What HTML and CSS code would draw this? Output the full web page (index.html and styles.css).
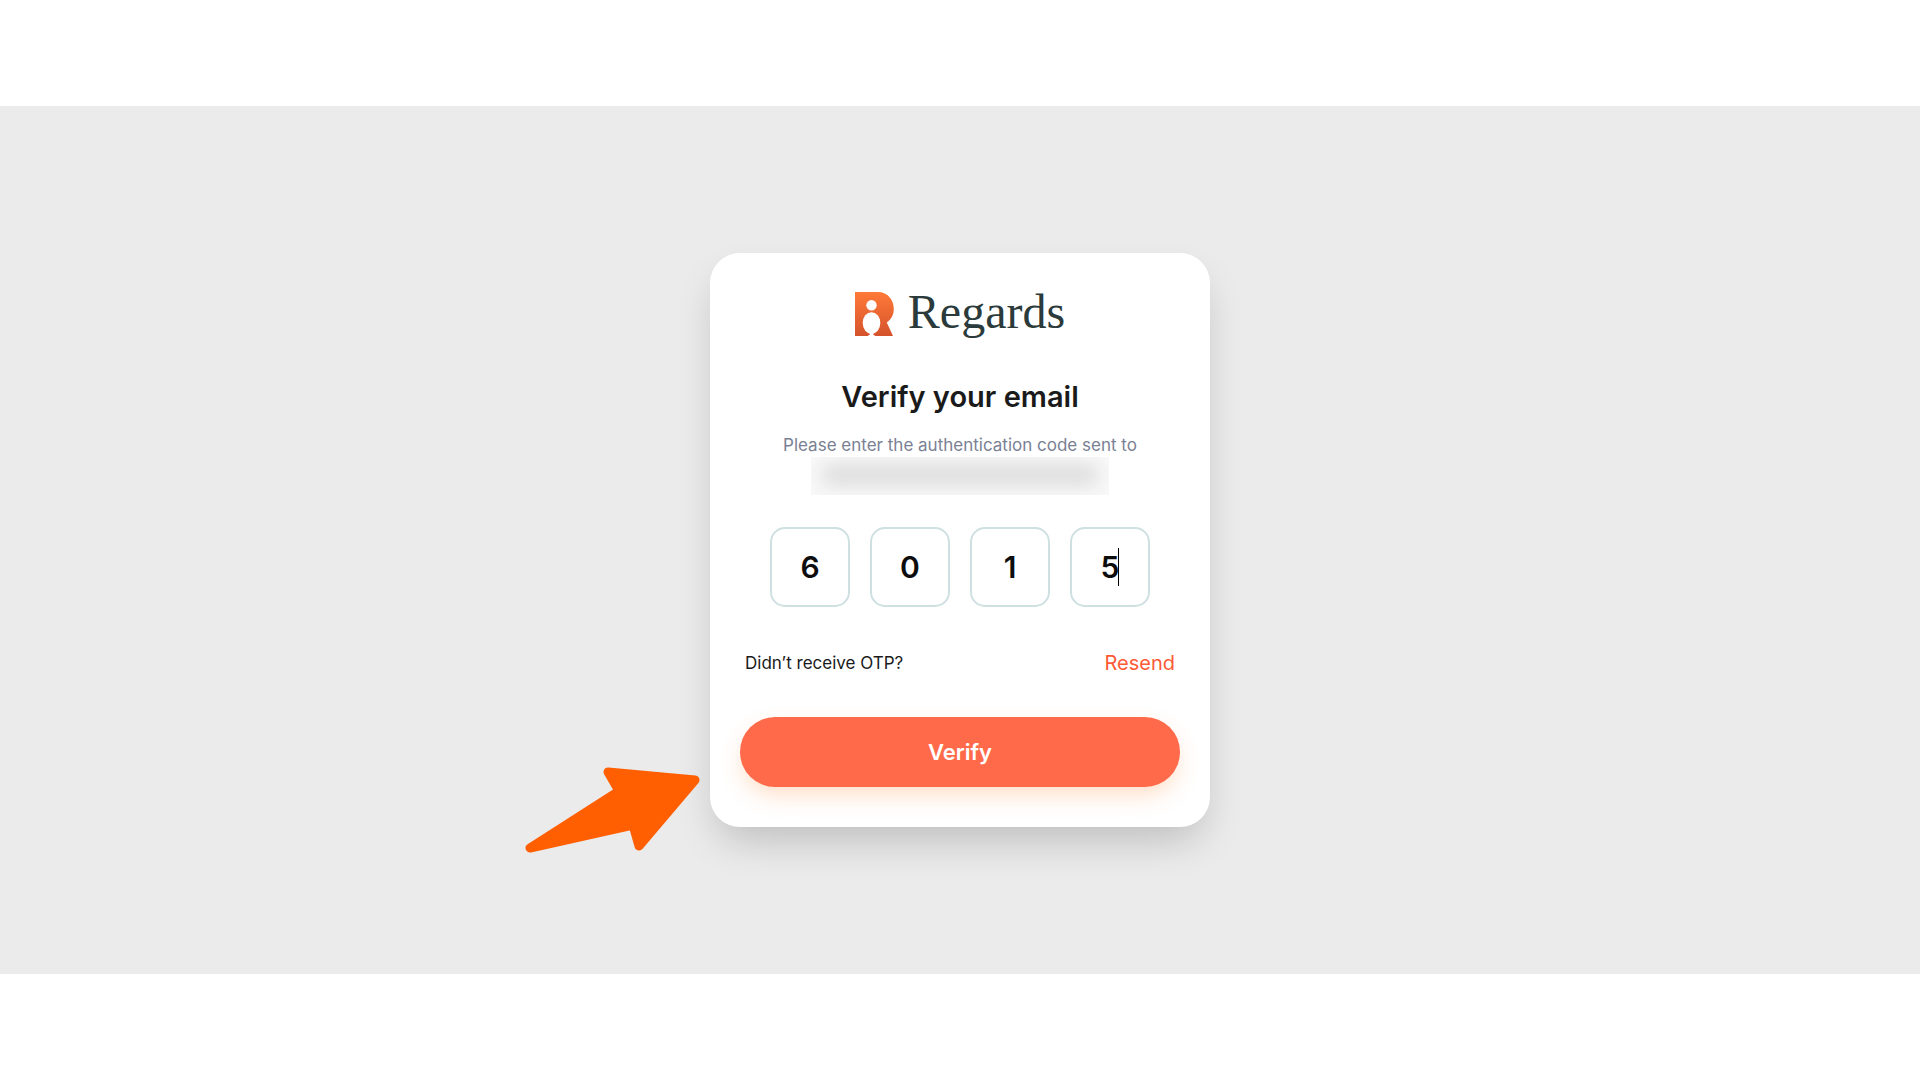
FILE: index.html
```html
<!DOCTYPE html>
<html lang="en">
<head>
  <meta charset="UTF-8">
  <meta name="viewport" content="width=device-width, initial-scale=1.0">
  <title>Regards - Verify your email</title>
  <link rel="stylesheet" href="styles.css">
</head>
<body>

  <main class="page">
    <form class="card">
      <div class="logo">
        <svg class="logo-mark" viewBox="0 0 39 44" aria-hidden="true">
          <defs>
            <linearGradient id="markFill" x1="0" y1="0" x2="0" y2="1">
              <stop offset="0" stop-color="#ff7a38"/>
              <stop offset="1" stop-color="#d4532c"/>
            </linearGradient>
          </defs>
          <path fill="url(#markFill)" d="M0 0H23C33 0 38.8 8 38.8 17C38.8 23 36 27.500 31.800 30.500L38 44H0Z"/>
          <circle cx="16.500" cy="13.300" r="5.200" fill="#fff"/>
          <ellipse cx="16.500" cy="31" rx="8.800" ry="10.800" fill="#fff"/>
          <path fill="#fff" d="M14 41H19L18 42.500L20.500 44H12.500L15 42.500Z"/>
        </svg>
        <span class="logo-name">Regards</span>
      </div>

      <h1>Verify your email</h1>
      <p class="subtitle">Please enter the authentication code sent to</p>
      <div class="hidden-email"></div>

      <div class="otp">
        <input type="text" inputmode="numeric" maxlength="1" value="6" aria-label="Digit 1">
        <input type="text" inputmode="numeric" maxlength="1" value="0" aria-label="Digit 2">
        <input type="text" inputmode="numeric" maxlength="1" value="1" aria-label="Digit 3">
        <div class="active">
          <input type="text" inputmode="numeric" maxlength="1" value="5" aria-label="Digit 4">
          <span class="caret"></span>
        </div>
      </div>

      <div class="resend-row">
        <span>Didn’t receive OTP?</span>
        <a href="#" class="resend">Resend</a>
      </div>

      <button type="submit" class="verify">Verify</button>

      <svg class="arrow" viewBox="0 0 190 100" aria-hidden="true">
        <path d="M88 12L175 20L119 86L113 65L10 88L99 31Z"/>
      </svg>
    </form>
  </main>

</body>
</html>
```

FILE: styles.css
```css
* {
  box-sizing: border-box;
}

body {
  margin: 0;
  min-height: 100vh;
  display: flex;
  align-items: center;
  background-color: #fff;
  font-family: Inter, Arial, sans-serif;
  color: #1a1a1a;
}

.page {
  width: 100%;
  padding: 147px 20px;
  display: flex;
  justify-content: center;
  background-color: #ebebeb;
}

.card {
  position: relative;
  width: 100%;
  max-width: 500px;
  padding: 30px 30px 40px;
  display: flex;
  flex-direction: column;
  background-color: #fff;
  border-radius: 30px;
  box-shadow: 0 20px 40px -8px rgba(0, 0, 0, 0.2);
}

.logo {
  height: 62px;
  display: flex;
  align-items: center;
  justify-content: center;
  gap: 14px;
}

.logo-mark {
  width: 39px;
  height: 44px;
}

.logo-name {
  padding-bottom: 4px;
  font-family: "Liberation Serif", serif;
  font-size: 48px;
  line-height: 56px;
  color: #2b3a3a;
}

h1 {
  margin: 32px 0 16px;
  font-size: 29px;
  line-height: 40px;
  font-weight: 600;
  text-align: center;
}

.subtitle {
  margin: 0;
  font-size: 17px;
  line-height: 24px;
  text-align: center;
  color: #7a8194;
}

.hidden-email {
  width: 298px;
  height: 38px;
  margin: 0 auto;
  overflow: hidden;
  background-color: #f9f9f9;
}

.hidden-email::before {
  content: "";
  display: block;
  height: 18px;
  margin: 9px 12px;
  background-color: #d6d6d6;
  filter: blur(10px);
}

.otp {
  margin-top: 32px;
  display: flex;
  justify-content: center;
  gap: 20px;
}

.otp input {
  display: block;
  width: 80px;
  height: 80px;
  padding: 0;
  border: 2px solid #cfe0e2;
  border-radius: 15px;
  background-color: #fff;
  color: #0d0d0d;
  font-family: inherit;
  font-size: 30px;
  font-weight: 600;
  text-align: center;
}

.active {
  position: relative;
}

.caret {
  position: absolute;
  top: 21px;
  left: 48px;
  width: 1px;
  height: 38px;
  background-color: #000;
}

.resend-row {
  margin: 43px 5px 41px;
  display: flex;
  justify-content: space-between;
  font-size: 17px;
  line-height: 26px;
}

.resend {
  font-size: 20px;
  color: #ff5a36;
  text-decoration: none;
}

.verify {
  height: 70px;
  border: none;
  border-radius: 35px;
  background-color: #ff6b4a;
  box-shadow: 0 10px 24px -4px rgba(255, 140, 60, 0.32);
  color: #fff;
  font-family: inherit;
  font-size: 22px;
  font-weight: 600;
  cursor: pointer;
}

/* arrow pointing at the card */
.arrow {
  position: absolute;
  top: 507px;
  left: -190px;
  width: 190px;
  height: 100px;
}

.arrow path {
  fill: #ff5f00;
  stroke: #ff5f00;
  stroke-width: 9;
  stroke-linejoin: round;
}
```
